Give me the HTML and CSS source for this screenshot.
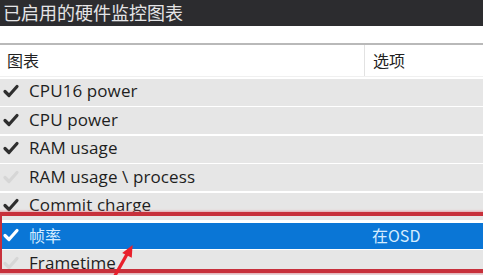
FILE: index.html
```html
<!DOCTYPE html>
<html>
<head>
<meta charset="utf-8">
<link rel="stylesheet" href="styles.css">
</head>
<body>
<div class="window">
  <div class="titlebar">已启用的硬件监控图表</div>
  <div class="spacer"></div>
  <div class="table">
    <div class="header">
      <div class="col1">图表</div>
      <div class="col2">选项</div>
    </div>
    <div class="row"><span class="chk"><svg viewBox="0 0 18 16"><path d="M3 8.5 L7 12.5 L15 3.5"/></svg></span><span class="name">CPU16 power</span><span class="opt"></span></div>
    <div class="row"><span class="chk"><svg viewBox="0 0 18 16"><path d="M3 8.5 L7 12.5 L15 3.5"/></svg></span><span class="name">CPU power</span><span class="opt"></span></div>
    <div class="row"><span class="chk"><svg viewBox="0 0 18 16"><path d="M3 8.5 L7 12.5 L15 3.5"/></svg></span><span class="name">RAM usage</span><span class="opt"></span></div>
    <div class="row off"><span class="chk"><svg viewBox="0 0 18 16"><path d="M3 8.5 L7 12.5 L15 3.5"/></svg></span><span class="name">RAM usage \ process</span><span class="opt"></span></div>
    <div class="row"><span class="chk"><svg viewBox="0 0 18 16"><path d="M3 8.5 L7 12.5 L15 3.5"/></svg></span><span class="name">Commit charge</span><span class="opt"></span></div>
    <div class="row selected"><span class="chk"><svg viewBox="0 0 18 16"><path d="M3 8.5 L7 12.5 L15 3.5"/></svg></span><span class="name">帧率</span><span class="opt">在OSD</span></div>
    <div class="row off"><span class="chk"><svg viewBox="0 0 18 16"><path d="M3 8.5 L7 12.5 L15 3.5"/></svg></span><span class="name">Frametime</span><span class="opt"></span></div>
  </div>
  <div class="highlight"></div>
  <svg class="arrow" viewBox="0 0 40 40"><path d="M4 40 L22 8" /><polygon points="27,0 14,10 26,16"/></svg>
</div>
</body>
</html>
```
FILE: styles.css
```css
html, body {
  margin: 0;
  padding: 0;
  background: #ffffff;
  overflow: hidden;
}
.window {
  position: relative;
  width: 483px;
  height: 275px;
  overflow: hidden;
  font-family: "Open Sans", "Noto Sans", "Noto Sans CJK SC", sans-serif;
  background: #ffffff;
}
.titlebar {
  height: 26px;
  background: #2c2c2f;
  color: #e4e4e6;
  font-family: "Noto Sans CJK SC", sans-serif;
  font-size: 18px;
  line-height: 25px;
  padding-left: 3px;
  white-space: nowrap;
}
.spacer {
  height: 17px;
  border-bottom: 2px solid #b9b9b9;
}
.header {
  display: grid;
  grid-template-columns: 365px 1fr;
  height: 31px;
  border-bottom: 1px solid #f0f0f0;
  font-family: "Noto Sans CJK SC", sans-serif;
  font-size: 16px;
  color: #222;
  line-height: 31px;
}
.header .col1 {
  padding-left: 7px;
  border-right: 1px solid #e2e2e2;
}
.header .col2 {
  padding-left: 8px;
}
.row {
  display: grid;
  grid-template-columns: 29px 336px 1fr;
  align-items: center;
  height: 27px;
  margin-top: 1.5px;
  background: #e6e6e6;
  font-size: 17px;
  color: #1e1e1e;
}
.row .name {
  white-space: nowrap;
  letter-spacing: 0.1px;
  padding-bottom: 3px;
}
.chk {
  display: flex;
  align-items: center;
  padding-left: 2px;
  padding-bottom: 2px;
}
.chk svg {
  width: 18px;
  height: 16px;
}
.chk path {
  fill: none;
  stroke: #2e2e2e;
  stroke-width: 3.2;
  stroke-linecap: round;
  stroke-linejoin: round;
}
.row.off .chk path {
  stroke: #d6d6d6;
}
.row.selected {
  background: #0a76d6;
  color: #d4ecff;
  margin-top: 3px;
  height: 26px;
}
.row.selected .name,
.row.selected .opt {
  font-family: "Noto Sans CJK SC", sans-serif;
  font-size: 16px;
  padding-bottom: 2px;
}
.row.selected .opt {
  padding-left: 7px;
}
.row.selected .chk path {
  stroke: #ffffff;
}
.highlight {
  position: absolute;
  left: -2px;
  top: 212px;
  width: 490px;
  height: 53px;
  border: 4px solid #c7303b;
  box-shadow: 0 0 2px 1px rgba(230, 120, 130, 0.6);
}
.arrow {
  position: absolute;
  left: 111px;
  top: 245px;
  width: 32px;
  height: 32px;
}
.arrow path {
  stroke: #e8202c;
  stroke-width: 4;
  fill: none;
}
.arrow polygon {
  fill: #e8202c;
}
```
